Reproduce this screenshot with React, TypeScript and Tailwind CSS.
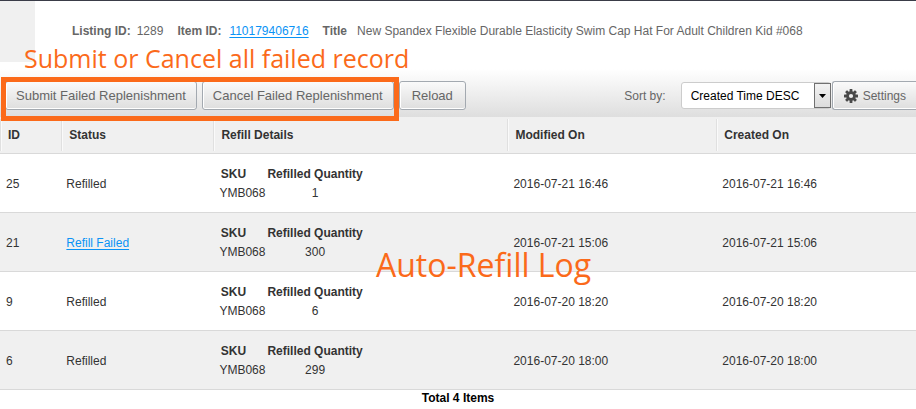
import { ReactNode } from 'react';
import clsx from 'clsx';

interface RefillRecord {
  id: number;
  failed: boolean;
  sku: string;
  quantity: number;
  modifiedOn: string;
  createdOn: string;
}

const records: RefillRecord[] = [
  { id: 25, failed: false, sku: 'YMB068', quantity: 1, modifiedOn: '2016-07-21 16:46', createdOn: '2016-07-21 16:46' },
  { id: 21, failed: true, sku: 'YMB068', quantity: 300, modifiedOn: '2016-07-21 15:06', createdOn: '2016-07-21 15:06' },
  { id: 9, failed: false, sku: 'YMB068', quantity: 6, modifiedOn: '2016-07-20 18:20', createdOn: '2016-07-20 18:20' },
  { id: 6, failed: false, sku: 'YMB068', quantity: 299, modifiedOn: '2016-07-20 18:00', createdOn: '2016-07-20 18:00' },
];

const columns = ['ID', 'Status', 'Refill Details', 'Modified On', 'Created On'];

function ToolbarButton({ children, className }: { children: ReactNode; className: string }) {
  return (
    <button
      type="button"
      className={clsx(
        'flex h-[29px] items-center whitespace-nowrap rounded-[3px] border border-[#a3a9b0] bg-linear-to-b from-[#fafafa] to-[#dedede] text-[13px] text-[#666] shadow-[inset_0_-1px_0_#fff,inset_1px_0_0_#fff]',
        className,
      )}
    >
      {children}
    </button>
  );
}

function GearIcon() {
  return (
    <svg viewBox="0 0 14 14" className="h-3.5 w-3.5 shrink-0" aria-hidden="true">
      <g fill="#4a4a4a">
        {[0, 45, 90, 135].map((angle) => (
          <rect key={angle} x="5.6" y="0" width="2.8" height="14" rx="0.5" transform={`rotate(${angle} 7 7)`} />
        ))}
        <circle cx="7" cy="7" r="4.8" />
      </g>
      <circle cx="7" cy="7" r="2.1" fill="#eee" />
    </svg>
  );
}

function ListingInfo() {
  return (
    <header className="relative flex h-[69px] items-start border-t border-[#3a3c48]">
      <div className="h-[61px] w-[35px] shrink-0 bg-[#f0f0f0]" />
      <dl className="flex items-center whitespace-nowrap pl-[37px] pt-[22px] text-[12px] leading-4 text-[#666]">
        <dt className="font-bold">Listing ID:</dt>
        <dd className="ml-1.5 mr-3.5">1289</dd>
        <dt className="font-bold">Item ID:</dt>
        <dd className="ml-2 mr-3.5">
          <a href="#item" className="text-[#0a93f5] underline underline-offset-2">110179406716</a>
        </dd>
        <dt className="font-bold">Title</dt>
        <dd className="ml-2.5">New Spandex Flexible Durable Elasticity Swim Cap Hat For Adult Children Kid #068</dd>
      </dl>
      <p className="absolute left-6 top-[41px] whitespace-nowrap font-['Open_Sans',sans-serif] text-[25px] leading-8 text-[#fb6a1a]">
        Submit or Cancel all failed record
      </p>
    </header>
  );
}

function Toolbar() {
  return (
    <div className="flex items-start justify-between bg-linear-to-b from-white to-[#dedede] pb-[7px] pl-[5px] pt-3">
      <div className="flex gap-[5px]">
        <div className="relative z-10 flex gap-[5px]">
          <ToolbarButton className="px-2.5">Submit Failed Replenishment</ToolbarButton>
          <ToolbarButton className="px-2.5">Cancel Failed Replenishment</ToolbarButton>
          {/* highlight frame */}
          <div className="pointer-events-none absolute -bottom-[11px] -left-1 -right-[5px] -top-1 border-5 border-[#fb6a1a]" />
        </div>
        <ToolbarButton className="px-3">Reload</ToolbarButton>
      </div>
      <div className="flex items-center">
        <label htmlFor="sort" className="mr-[15px] text-[12px] text-[#666]">Sort by:</label>
        <div className="relative mr-px">
          <select
            id="sort"
            className="block h-[27px] w-[150px] appearance-none rounded-[3px] border border-[#ccc] bg-white pl-[9px] text-[12px] text-black"
          >
            <option>Created Time DESC</option>
            <option>Created Time ASC</option>
          </select>
          <span className="pointer-events-none absolute bottom-px right-0 top-px flex w-[17px] items-center justify-center border border-[#707070] bg-linear-to-b from-[#f2f2f2] to-[#dcdcdc]">
            <svg viewBox="0 0 7 4" className="h-1 w-[7px]" aria-hidden="true">
              <path d="M0 0h7L3.5 4z" fill="#000" />
            </svg>
          </span>
        </div>
        <ToolbarButton className="gap-[5px] rounded-r-none border-r-0 pl-[11px] pr-2.5">
          <GearIcon />
          <span className="text-[12px]">Settings</span>
        </ToolbarButton>
      </div>
    </div>
  );
}

function RefillDetails({ sku, quantity }: { sku: string; quantity: number }) {
  return (
    <table className="text-center">
      <thead>
        <tr>
          <th className="h-[19px] w-12 pr-5 font-bold">SKU</th>
          <th className="h-[19px] whitespace-nowrap font-bold">Refilled Quantity</th>
        </tr>
      </thead>
      <tbody>
        <tr>
          <td className="h-[19px] w-12 text-left">{sku}</td>
          <td className="h-[19px]">{quantity}</td>
        </tr>
      </tbody>
    </table>
  );
}

function RefillTable() {
  return (
    <table className="w-full table-fixed text-left text-[12px] leading-4 text-[#333]">
      <colgroup>
        <col className="w-[6.7%]" />
        <col className="w-[16.6%]" />
        <col className="w-[32.1%]" />
        <col className="w-[22.8%]" />
        <col />
      </colgroup>
      <thead>
        <tr className="h-9 border-b border-[#d9d9d9] bg-[#f0f0f0]">
          {columns.map((name) => (
            <th key={name} className="p-0 font-bold">
              <div className="border-l border-[#e0e0e0] py-2 pl-[7px] shadow-[inset_1px_0_0_#fafafa]">{name}</div>
            </th>
          ))}
        </tr>
      </thead>
      <tbody>
        {records.map((record) => (
          <tr key={record.id} className="h-[59px] border-b border-[#d9d9d9] even:bg-[#f0f0f0]">
            <td className="pl-1.5 pt-0.5">{record.id}</td>
            <td className="pl-[5px] pt-0.5">
              {record.failed ? (
                <a href="#failed" className="text-[#0a93f5] underline underline-offset-2">Refill Failed</a>
              ) : (
                'Refilled'
              )}
            </td>
            <td className="pl-1.5 pt-0.5">
              <RefillDetails sku={record.sku} quantity={record.quantity} />
            </td>
            <td className="pl-1.5 pt-0.5">{record.modifiedOn}</td>
            <td className="pl-1.5 pt-0.5">{record.createdOn}</td>
          </tr>
        ))}
      </tbody>
    </table>
  );
}

export default function App() {
  return (
    <div className="min-h-screen overflow-hidden bg-white font-['Liberation_Sans',Arial,sans-serif]">
      <ListingInfo />
      <Toolbar />
      <main className="relative">
        <RefillTable />
        <p className="pointer-events-none absolute left-[376px] top-[126px] whitespace-nowrap font-['Open_Sans',sans-serif] text-[32px] leading-11 text-[#fb6a1a]">
          Auto-Refill Log
        </p>
      </main>
      <footer className="text-center text-[12px] font-bold leading-4 text-black">Total 4 Items</footer>
    </div>
  );
}
